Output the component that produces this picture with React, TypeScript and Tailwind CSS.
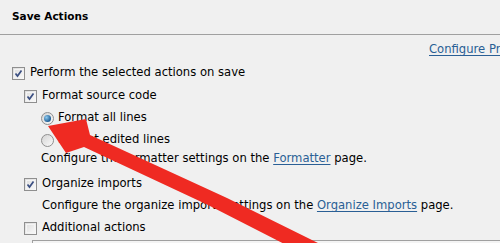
import React from "react";

function CheckBox({ checked }: { checked?: boolean }) {
  return (
    <span className="relative flex h-[13px] w-[13px] shrink-0 items-center justify-center border border-[#8f8f8f] bg-gradient-to-br from-[#dcdcdc] to-[#fbfbfb]">
      <span className="absolute inset-[1px] border border-[#f4f4f4]" />
      {checked && (
        <svg viewBox="0 0 11 11" className="relative h-[11px] w-[11px]">
          <path d="M2.5 5.5 L4.5 8 L8.5 2.5" fill="none" stroke="#3b4f82" strokeWidth="1.7" />
        </svg>
      )}
    </span>
  );
}

function Radio({ checked }: { checked?: boolean }) {
  return (
    <span className="flex h-[13px] w-[13px] shrink-0 items-center justify-center rounded-full border border-[#8f8f8f] bg-gradient-to-br from-[#d4d4d4] to-[#fafafa]">
      {checked && (
        <span className="h-[7px] w-[7px] rounded-full bg-[radial-gradient(circle_at_35%_35%,#8ecbf0,#1d5d95_70%)]" />
      )}
    </span>
  );
}

function Link({ children }: { children: React.ReactNode }) {
  return <span className="text-[#2a5f95] underline underline-offset-2">{children}</span>;
}

export default function App() {
  return (
    <div className="relative h-[243px] w-[500px] overflow-hidden bg-[#f0f0f0] text-[11.6px] text-black [font-family:'DejaVu_Sans',sans-serif]">
      {/* Header */}
      <div className="flex h-[35px] items-center border-b border-[#a0a0a0] px-[12px] text-[10.5px] font-bold">
        Save Actions
      </div>

      {/* Body */}
      <div className="flex flex-col">
        <div className="flex h-[30px] items-center whitespace-nowrap pl-[429px]">
          <Link>Configure Project Specific Settings...</Link>
        </div>

        <label className="mt-[1px] flex h-[14px] items-center gap-[5px] pl-[12px]">
          <CheckBox checked />
          <span>Perform the selected actions on save</span>
        </label>

        <div className="flex flex-col pl-[24px]">
          <label className="mt-[9px] flex h-[14px] items-center gap-[5px]">
            <CheckBox checked />
            <span>Format source code</span>
          </label>
          <div className="flex flex-col pl-[17px]">
            <label className="mt-[8px] flex h-[14px] items-center gap-[4px]">
              <Radio checked />
              <span>Format all lines</span>
            </label>
            <label className="mt-[8px] flex h-[14px] items-center gap-[4px]">
              <Radio />
              <span>Format edited lines</span>
            </label>
            <div className="mt-[5px] flex h-[14px] items-center whitespace-nowrap">
              Configure the formatter settings on the&nbsp;<Link>Formatter</Link>&nbsp;page.
            </div>
          </div>

          <label className="mt-[11px] flex h-[14px] items-center gap-[5px]">
            <CheckBox checked />
            <span>Organize imports</span>
          </label>
          <div className="mt-[8px] flex h-[14px] items-center whitespace-nowrap pl-[18px]">
            Configure the organize imports settings on the&nbsp;<Link>Organize Imports</Link>&nbsp;page.
          </div>

          <label className="mt-[8px] flex h-[14px] items-center gap-[5px]">
            <CheckBox />
            <span>Additional actions</span>
          </label>
          <div className="ml-[8px] mt-[5px] h-[40px] border-l border-t border-[#a0a0a0] bg-[#f4f4f4]" />
        </div>
      </div>

      {/* Red annotation arrow */}
      <svg className="pointer-events-none absolute left-0 top-0" width="500" height="243" viewBox="0 0 500 243">
        <polygon
          points="48,126 86,119 90,135 227,198 318,243 318,252 300,252 208,205 84,147 66,153"
          fill="#ef2a22"
          strokeLinejoin="round"
        />
      </svg>
    </div>
  );
}
